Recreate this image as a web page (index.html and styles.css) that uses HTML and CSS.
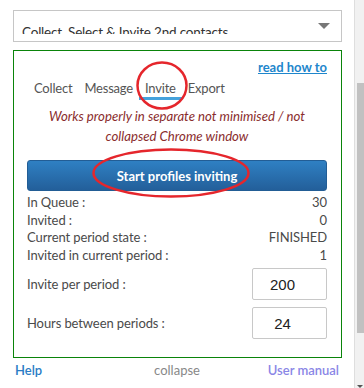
FILE: index.html
```html
<!DOCTYPE html>
<html lang="en">
<head>
  <meta charset="UTF-8">
  <meta name="viewport" content="width=device-width, initial-scale=1.0">
  <title>Invite 2nd contacts</title>
  <link rel="stylesheet" href="styles.css">
</head>
<body>
  <div class="page">
    <div class="panel">
      <!-- Mode dropdown -->
      <div class="mode-select">
        <span class="mode-text">Collect, Select &amp; Invite 2nd contacts</span>
        <span class="caret"></span>
      </div>

      <!-- Tool box -->
      <div class="tool-box">
        <div class="read-row">
          <a class="read-how" href="#">read how to</a>
        </div>

        <div class="tabs">
          <span class="tab">Collect</span>
          <span class="tab">Message</span>
          <span class="tab active">Invite</span>
          <span class="tab">Export</span>
        </div>

        <p class="warning">Works properly in separate not minimised / not<br>collapsed Chrome window</p>

        <button type="button" class="start-button">Start profiles inviting</button>

        <div class="stats">
          <div class="stat-row"><span>In Queue :</span><span>30</span></div>
          <div class="stat-row"><span>Invited :</span><span>0</span></div>
          <div class="stat-row"><span>Current period state :</span><span>FINISHED</span></div>
          <div class="stat-row"><span>Invited in current period :</span><span>1</span></div>
        </div>

        <div class="setting">
          <label for="perPeriod">Invite per period :</label>
          <input type="number" id="perPeriod" value="200">
        </div>
        <div class="setting">
          <label for="hoursBetween">Hours between periods :</label>
          <input type="number" id="hoursBetween" value="24">
        </div>
      </div>

      <!-- Footer links -->
      <div class="footer">
        <a class="help" href="#">Help</a>
        <span class="collapse">collapse</span>
        <a class="manual" href="#">User manual</a>
      </div>
    </div>

    <!-- Scrollbar -->
    <div class="scrollbar">
      <div class="thumb"></div>
      <span class="scroll-arrow"></span>
    </div>
  </div>

  <!-- Red annotation marks -->
  <svg class="mark mark-tab" width="54" height="51" viewBox="0 0 54 51">
    <ellipse cx="27" cy="25.5" rx="24.5" ry="23" fill="none" stroke="#e5262c" stroke-width="2.5"/>
  </svg>
  <svg class="mark mark-button" width="160" height="52" viewBox="0 0 160 52">
    <ellipse cx="80" cy="26" rx="77.5" ry="23.5" fill="none" stroke="#e5262c" stroke-width="2.5"/>
  </svg>
</body>
</html>
```

FILE: styles.css
```css
/* General */
body {
  margin: 0;
  font-family: 'Lato', sans-serif;
  color: #4a4a4a;
  background: #ffffff;
}

.page {
  display: flex;
  height: 388px;
  overflow: hidden;
}

.panel {
  flex: 1;
  padding-top: 10px;
}

/* Mode dropdown */
.mode-select {
  display: flex;
  justify-content: space-between;
  box-sizing: border-box;
  height: 32px;
  margin: 0 12px 0 13px;
  padding: 0 11px 0 8px;
  border: 1px solid #c6c6c6;
}

.mode-text {
  display: block;
  height: 23px;
  overflow: hidden;
  padding-top: 11px;
  box-sizing: border-box;
  font-size: 13.5px;
  letter-spacing: -0.2px;
  line-height: 20px;
  color: #333;
}

.caret {
  width: 0;
  height: 0;
  margin-top: 12px;
  border-left: 6.5px solid transparent;
  border-right: 6.5px solid transparent;
  border-top: 6px solid #777;
}

/* Tool box */
.tool-box {
  margin: 8px 12px 0 13px;
  padding: 7px 14px 18px 13px;
  border: 1px solid #0a840a;
}

.read-row {
  text-align: right;
  line-height: 16px;
}

.read-how {
  font-size: 13px;
  font-weight: bold;
  color: #1e86cc;
}

.tabs {
  display: flex;
  margin-top: 4px;
  margin-left: 1px;
}

.tab {
  padding: 0 6px;
  font-size: 13px;
  letter-spacing: -0.2px;
  line-height: 18px;
  color: #555;
  border-bottom: 3px solid transparent;
}

.tab.active {
  border-bottom-color: #45a2dc;
}

.warning {
  margin: 6px 0 0;
  text-align: center;
  font-size: 13.2px;
  font-style: italic;
  line-height: 20px;
  color: #8a2d2d;
}

.start-button {
  display: block;
  width: 100%;
  height: 31px;
  margin-top: 14px;
  border: 1px solid #225d95;
  border-radius: 3px;
  background: linear-gradient(#2f80c3, #235f9a);
  color: #ffffff;
  font-family: 'Lato', sans-serif;
  font-size: 13px;
  font-weight: bold;
  cursor: pointer;
}

/* Stats */
.stats {
  margin-top: 3px;
}

.stat-row {
  display: flex;
  justify-content: space-between;
  font-size: 13px;
  letter-spacing: -0.1px;
  line-height: 17.5px;
}

/* Settings */
.setting {
  display: flex;
  justify-content: space-between;
  align-items: center;
  margin-top: 4px;
}

.setting + .setting {
  margin-top: 7px;
}

.setting label {
  font-size: 13px;
  letter-spacing: -0.1px;
}

.setting input {
  box-sizing: border-box;
  width: 75px;
  height: 32px;
  padding: 0 14px 0 0;
  border: 1px solid #c8c8c8;
  border-radius: 2px;
  text-align: center;
  font-family: 'Liberation Sans', sans-serif;
  font-size: 15px;
  color: #222;
  -moz-appearance: textfield;
}

.setting input::-webkit-inner-spin-button,
.setting input::-webkit-outer-spin-button {
  -webkit-appearance: none;
  margin: 0;
}

/* Footer */
.footer {
  display: grid;
  grid-template-columns: 1fr auto 1fr;
  margin-top: 3px;
  padding: 0 15px;
  font-size: 13px;
  line-height: 18px;
}

.footer a {
  text-decoration: none;
  font-weight: 600;
}

.help {
  color: #2a7cc5;
}

.collapse {
  color: #888;
}

.manual {
  justify-self: end;
  color: #8a86e6;
}

/* Scrollbar */
.scrollbar {
  position: relative;
  width: 9px;
  border-left: 1px solid #dedede;
  background: #f1f1f1;
}

.thumb {
  width: 7px;
  height: 250px;
  margin: 83px 0 0 2px;
  background: #c1c1c1;
}

.scroll-arrow {
  position: absolute;
  right: 1px;
  bottom: 0;
  border-left: 3px solid transparent;
  border-right: 3px solid transparent;
  border-top: 3px solid #555;
}

/* Annotation marks */
.mark {
  position: absolute;
}

.mark-tab {
  left: 135px;
  top: 60px;
}

.mark-button {
  left: 91px;
  top: 147px;
}
```
